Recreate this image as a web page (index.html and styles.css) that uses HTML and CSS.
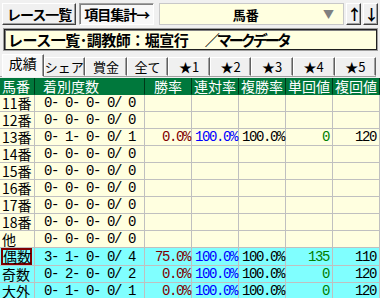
FILE: index.html
```html
<!DOCTYPE html>
<html>
<head>
    <title>項目集計</title>
    <link rel="stylesheet" href="styles.css">
</head>
<body>
    <div class="window">
        <div class="topbar">
            <button class="btn">レース一覧</button>
            <button class="btn pressed">項目集計→</button>
            <div class="picker">
                <span class="picker-text">馬番</span>
                <span class="picker-arrow">▼</span>
            </div>
            <button class="btn arrow">↑</button>
            <button class="btn arrow">↓</button>
        </div>

        <div class="title">レース一覧･調教師：堀宣行　<span class="mark">／マークデータ</span></div>

        <div class="tabs">
            <div class="tab active">成績</div>
            <div class="tab">シェア</div>
            <div class="tab">賞金</div>
            <div class="tab">全て</div>
            <div class="tab">★1</div>
            <div class="tab">★2</div>
            <div class="tab">★3</div>
            <div class="tab">★4</div>
            <div class="tab">★5</div>
        </div>

        <table class="grid">
            <colgroup>
                <col class="c-name">
                <col class="c-count">
                <col class="c-num">
                <col class="c-num">
                <col class="c-num">
                <col class="c-num">
                <col class="c-num">
            </colgroup>
            <thead>
                <tr>
                    <th class="left">馬番</th>
                    <th class="left pad">着別度数</th>
                    <th>勝率</th>
                    <th>連対率</th>
                    <th>複勝率</th>
                    <th>単回値</th>
                    <th>複回値</th>
                </tr>
            </thead>
            <tbody>
                <tr><td class="name">11番</td><td class="count">0- 0- 0- 0/ 0</td><td></td><td></td><td></td><td></td><td></td></tr>
                <tr><td class="name">12番</td><td class="count">0- 0- 0- 0/ 0</td><td></td><td></td><td></td><td></td><td></td></tr>
                <tr><td class="name">13番</td><td class="count">0- 1- 0- 0/ 1</td><td class="pct win">0.0%</td><td class="pct place">100.0%</td><td class="pct show">100.0%</td><td class="val tan">0</td><td class="val fuku">120</td></tr>
                <tr><td class="name">14番</td><td class="count">0- 0- 0- 0/ 0</td><td></td><td></td><td></td><td></td><td></td></tr>
                <tr><td class="name">15番</td><td class="count">0- 0- 0- 0/ 0</td><td></td><td></td><td></td><td></td><td></td></tr>
                <tr><td class="name">16番</td><td class="count">0- 0- 0- 0/ 0</td><td></td><td></td><td></td><td></td><td></td></tr>
                <tr><td class="name">17番</td><td class="count">0- 0- 0- 0/ 0</td><td></td><td></td><td></td><td></td><td></td></tr>
                <tr><td class="name">18番</td><td class="count">0- 0- 0- 0/ 0</td><td></td><td></td><td></td><td></td><td></td></tr>
                <tr><td class="name">他</td><td class="count">0- 0- 0- 0/ 0</td><td></td><td></td><td></td><td></td><td></td></tr>
                <tr class="sum"><td class="name"><span class="selected">偶数</span></td><td class="count">3- 1- 0- 0/ 4</td><td class="pct win">75.0%</td><td class="pct place">100.0%</td><td class="pct show">100.0%</td><td class="val tan">135</td><td class="val fuku">110</td></tr>
                <tr class="sum"><td class="name">奇数</td><td class="count">0- 2- 0- 0/ 2</td><td class="pct win">0.0%</td><td class="pct place">100.0%</td><td class="pct show">100.0%</td><td class="val tan">0</td><td class="val fuku">120</td></tr>
                <tr class="sum"><td class="name">大外</td><td class="count">0- 1- 0- 0/ 1</td><td class="pct win">0.0%</td><td class="pct place">100.0%</td><td class="pct show">100.0%</td><td class="val tan">0</td><td class="val fuku">120</td></tr>
            </tbody>
        </table>
    </div>
</body>
</html>
```

FILE: styles.css
```css
body {
    margin: 0;
    font-family: "Noto Sans CJK JP", sans-serif;
    background: #ffffff;
}
.window {
    width: 380px;
    height: 298px;
    overflow: hidden;
    background: #f0f0f0;
}
.topbar {
    display: flex;
    align-items: center;
    height: 28px;
    padding: 0 2px;
    gap: 2px;
}
.btn {
    height: 22px;
    margin: 0;
    padding: 0 4px;
    font-family: "Noto Sans CJK JP", sans-serif;
    font-size: 14px;
    font-weight: bold;
    line-height: 18px;
    color: #000;
    background: #f0f0f0;
    border: 1px solid;
    border-color: #ffffff #404040 #404040 #ffffff;
    box-shadow: inset -1px -1px #a0a0a0;
    letter-spacing: -1px;
}
.btn.pressed {
    background: #f8f8f8;
    border-color: #a0a0a0 #ffffff #ffffff #a0a0a0;
    box-shadow: inset 1px 1px #808080;
    margin-left: 1px;
}
.picker {
    flex: 1;
    display: flex;
    align-items: center;
    height: 20px;
    margin-left: 3px;
    background: #ffffe0;
    border: 1px solid #c8c8c8;
}
.picker-text {
    flex: 1;
    text-align: center;
    font-size: 13px;
    font-weight: bold;
    padding-left: 8px;
}
.picker-arrow {
    width: 20px;
    font-size: 11px;
    color: #808080;
}
.btn.arrow {
    width: 15px;
    padding: 0;
    font-size: 15px;
    letter-spacing: 0;
}
.title {
    margin: 1px 3px 0 4px;
    height: 19px;
    padding-left: 3px;
    background: #ffffe0;
    border: 1px solid #202020;
    box-shadow: 0 0 0 1px #a0a0a0, inset 1px 1px #808080;
    font-size: 15px;
    font-weight: bold;
    line-height: 19px;
    white-space: nowrap;
    letter-spacing: -0.5px;
}
.mark {
    margin-left: 2px;
    letter-spacing: -3px;
}
.tabs {
    display: flex;
    width: 374px;
    height: 22px;
    margin-top: 4px;
    padding-left: 2px;
    border-bottom: 1px solid #a0a0a0;
}
.tab {
    flex: 1;
    height: 17px;
    margin-top: 3px;
    font-size: 13px;
    line-height: 17px;
    text-align: center;
    white-space: nowrap;
    background: #f0f0f0;
    border: 1px solid;
    border-color: #ffffff #606060 transparent #ffffff;
    box-shadow: inset -1px 0 #a0a0a0;
}
.tab.active {
    height: 21px;
    margin-top: 0;
    font-size: 14px;
    background: #f8f8f8;
}
.grid {
    border-collapse: separate;
    border-spacing: 0;
    table-layout: fixed;
    width: 380px;
    margin-top: 1px;
}
.c-name { width: 35px; }
.c-count { width: 110px; }
.c-num { width: 47px; }
.grid th {
    height: 16px;
    padding: 0;
    font-size: 14px;
    font-weight: normal;
    line-height: 16px;
    color: #ffffff;
    background: #00783c;
    border-right: 1px solid #003818;
    border-bottom: 1px solid #00783c;
    text-align: center;
    white-space: nowrap;
}
.grid th.left {
    text-align: left;
    padding-left: 2px;
}
.grid th.pad {
    padding-left: 8px;
}
.grid td {
    height: 16px;
    padding: 0;
    background: #ffffe0;
    border-right: 1px solid #c0c0c0;
    border-bottom: 1px solid #c0c0c0;
    white-space: pre;
}
.grid tr.sum td {
    background: #80ffff;
}
.name {
    font-size: 14px;
    line-height: 16px;
    padding-left: 2px !important;
}
.selected {
    display: block;
    width: 27px;
    height: 13px;
    line-height: 13px;
    border: 2px solid #800000;
    margin-left: -1px;
}
.count, .pct, .val {
    font-family: "Liberation Mono", monospace;
    font-size: 14px;
    letter-spacing: -1.4px;
    line-height: 16px;
}
.count {
    padding-left: 9px !important;
}
.pct {
    text-align: right;
    padding-right: 1px !important;
}
.val {
    text-align: right;
    padding-right: 3px !important;
}
.win { color: #800000; }
.place { color: #0000ff; }
.show { color: #000000; }
.tan { color: #008000; }
.fuku { color: #000000; }
```
